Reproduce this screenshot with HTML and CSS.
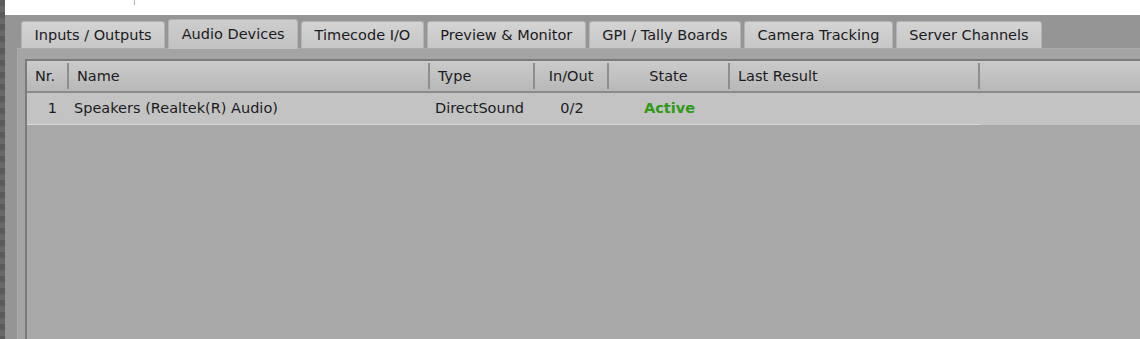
FILE: index.html
```html
<!DOCTYPE html>
<html lang="en">
<head>
  <meta charset="UTF-8">
  <meta name="viewport" content="width=device-width, initial-scale=1.0">
  <title>Audio Devices</title>
  <link rel="stylesheet" href="styles.css">
</head>
<body>

  <div class="screen">
    <div class="edge"></div>

    <div class="main">
      <div class="topbar"><span class="caret"></span></div>

      <div class="workspace">
        <div class="tabs">
          <div class="tab">Inputs / Outputs</div>
          <div class="tab active">Audio Devices</div>
          <div class="tab">Timecode I/O</div>
          <div class="tab">Preview &amp; Monitor</div>
          <div class="tab">GPI / Tally Boards</div>
          <div class="tab">Camera Tracking</div>
          <div class="tab">Server Channels</div>
        </div>

        <div class="pane">
          <div class="grid">
            <div class="head">
              <div class="hcell">Nr.</div>
              <div class="hcell">Name</div>
              <div class="hcell">Type</div>
              <div class="hcell center">In/Out</div>
              <div class="hcell center">State</div>
              <div class="hcell">Last Result</div>
              <div class="hcell last"></div>
            </div>
            <div class="row">
              <div class="cell num">1</div>
              <div class="cell">Speakers (Realtek(R) Audio)</div>
              <div class="cell">DirectSound</div>
              <div class="cell center">0/2</div>
              <div class="cell center state-active">Active</div>
              <div class="cell"></div>
              <div class="cell filler"></div>
            </div>
          </div>
        </div>
      </div>
    </div>
  </div>

</body>
</html>
```

FILE: styles.css
```css
body {
  margin: 0;
  background-color: #959595;
  font-family: "DejaVu Sans", Verdana, sans-serif;
  font-size: 14.5px;
  color: #1b1b22;
  overflow: hidden;
}

.screen {
  display: flex;
  height: 100vh;
}

.edge {
  width: 5px;
  flex-shrink: 0;
  background: repeating-linear-gradient(180deg, #5b5b5b 0, #5b5b5b 6px, #686868 6px, #686868 12px);
}

.main {
  flex: 1;
  display: flex;
  flex-direction: column;
  min-width: 0;
}

.topbar {
  height: 15px;
  background-color: #fff;
  padding-left: 129px;
}

.caret {
  display: block;
  width: 1px;
  height: 5px;
  background-color: #9bb3d6;
}

.workspace {
  flex: 1;
  display: flex;
  flex-direction: column;
  background-color: #959595;
}

/* tab strip */
.tabs {
  display: flex;
  align-items: flex-end;
  gap: 3px;
  padding: 4px 0 0 16px;
  height: 29px;
}

.tab {
  height: 26px;
  line-height: 26px;
  padding: 0 12.5px;
  background: linear-gradient(#d4d4d4, #c7c7c7);
  border: 1px solid #b3b3b3;
  border-bottom: none;
  border-radius: 3px 3px 0 0;
  white-space: nowrap;
}

.tab.active {
  height: 29px;
  line-height: 28px;
  margin-bottom: -1px;
  background: linear-gradient(#cdcdcd, #c2c2c2);
  position: relative;
  z-index: 1;
}

/* panel under the tabs */
.pane {
  flex: 1;
  margin-left: 12px;
  padding: 10px 0 0 7px;
  background-color: #a4a4a4;
  border-top: 1px solid #acacac;
  border-left: 1px solid #aaaaaa;
}

.grid {
  height: 100%;
  background-color: #a8a8a8;
  border-top: 2px solid #7b7b7b;
  border-left: 2px solid #7b7b7b;
}

.head, .row {
  display: grid;
  grid-template-columns: 42px 361px 105px 74px 121px 250px 1fr;
}

.head {
  padding: 2px 0;
  background: linear-gradient(#cbcbcb, #b8b8b8);
  border-bottom: 2px solid #8a8a8a;
}

.hcell {
  height: 26px;
  line-height: 26px;
  padding-left: 8px;
  border-right: 2px solid #8e8e8e;
  white-space: nowrap;
}

.hcell.last {
  border-right: none;
}

.row {
  background-color: #c3c3c3;
}

.cell {
  height: 31px;
  line-height: 31px;
  padding-left: 5px;
  border-bottom: 1px solid #d6d6d6;
  white-space: nowrap;
}

.cell.filler {
  border-bottom-color: #c3c3c3;
}

.center {
  text-align: center;
  padding-left: 0;
}

.num {
  text-align: right;
  padding: 0 12px 0 0;
}

.state-active {
  color: #2f9a18;
  font-weight: bold;
}
```
